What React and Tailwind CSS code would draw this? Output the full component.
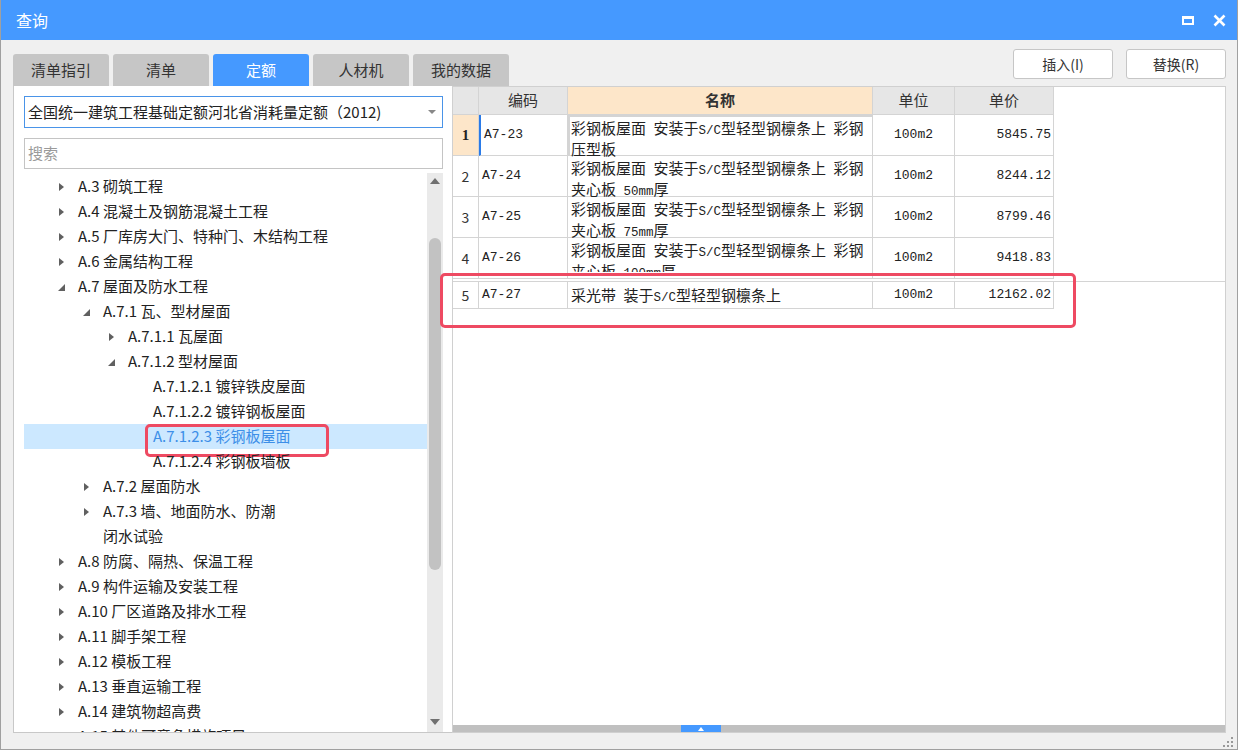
const tabs = ["清单指引", "清单", "定额", "人材机", "我的数据"];

const tree = [
  { t: "A.3 砌筑工程", l: 0, a: "r" },
  { t: "A.4 混凝土及钢筋混凝土工程", l: 0, a: "r" },
  { t: "A.5 厂库房大门、特种门、木结构工程", l: 0, a: "r" },
  { t: "A.6 金属结构工程", l: 0, a: "r" },
  { t: "A.7 屋面及防水工程", l: 0, a: "d" },
  { t: "A.7.1 瓦、型材屋面", l: 1, a: "d" },
  { t: "A.7.1.1 瓦屋面", l: 2, a: "r" },
  { t: "A.7.1.2 型材屋面", l: 2, a: "d" },
  { t: "A.7.1.2.1 镀锌铁皮屋面", l: 3 },
  { t: "A.7.1.2.2 镀锌钢板屋面", l: 3 },
  { t: "A.7.1.2.3 彩钢板屋面", l: 3, sel: true },
  { t: "A.7.1.2.4 彩钢板墙板", l: 3 },
  { t: "A.7.2 屋面防水", l: 1, a: "r" },
  { t: "A.7.3 墙、地面防水、防潮", l: 1, a: "r" },
  { t: "闭水试验", l: 1 },
  { t: "A.8 防腐、隔热、保温工程", l: 0, a: "r" },
  { t: "A.9 构件运输及安装工程", l: 0, a: "r" },
  { t: "A.10 厂区道路及排水工程", l: 0, a: "r" },
  { t: "A.11 脚手架工程", l: 0, a: "r" },
  { t: "A.12 模板工程", l: 0, a: "r" },
  { t: "A.13 垂直运输工程", l: 0, a: "r" },
  { t: "A.14 建筑物超高费", l: 0, a: "r" },
  { t: "A.15 其他可竞争措施项目", l: 0, a: "r" },
];

const indent = ["pl-[34px]", "pl-[59px]", "pl-[84px]", "pl-[109px]"];

const head = "彩钢板屋面 安装于S/C型轻型钢檩条上 彩钢";
const rows = [
  { n: "1", code: "A7-23", name: [head, "压型板"], unit: "100m2", price: "5845.75" },
  { n: "2", code: "A7-24", name: [head, "夹心板 50mm厚"], unit: "100m2", price: "8244.12" },
  { n: "3", code: "A7-25", name: [head, "夹心板 75mm厚"], unit: "100m2", price: "8799.46" },
  { n: "4", code: "A7-26", name: [head, "夹心板 100mm厚"], unit: "100m2", price: "9418.83", clip: true },
  { n: "5", code: "A7-27", name: ["采光带 装于S/C型轻型钢檩条上"], unit: "100m2", price: "12162.02", short: true },
];

const cjk = '"Noto Sans CJK SC", "Noto Sans", sans-serif';

function Mixed({ text }) {
  const parts = text.match(/[\x20-\x7e]+|[^\x20-\x7e]+/g) || [];
  return parts.map((p, i) =>
    /[\x20-\x7e]/.test(p[0]) ? (
      <span key={i} className="font-['Liberation_Mono',monospace] text-[12.5px] whitespace-pre">
        {p}
      </span>
    ) : (
      <span key={i}>{p}</span>
    )
  );
}

function Arrow({ a }) {
  if (a === "r")
    return (
      <svg width="6" height="10" viewBox="0 0 6 10" className="ml-[1px]">
        <path d="M0 1 L5 5 L0 9 Z" fill="#606060" />
      </svg>
    );
  if (a === "d")
    return (
      <svg width="8" height="8" viewBox="0 0 8 8" className="mt-[2px]">
        <path d="M7 0 L7 7 L0 7 Z" fill="#606060" />
      </svg>
    );
  return null;
}

export default function App() {
  return (
    <div
      className="w-[1238px] h-[750px] bg-[#f0f0f0] border-x border-b border-[#a0a0a0] flex flex-col overflow-hidden"
      style={{ fontFamily: cjk }}
    >
      <div className="h-[40px] shrink-0 bg-[#4599ff] flex items-center justify-between pl-[15px] pr-[11px]">
        <span className="text-white text-[16px]">查询</span>
        <div className="flex items-center gap-[19px]">
          <div className="w-[12px] h-[9px] border-2 border-white border-t-[3px]" />
          <svg width="13" height="13" viewBox="0 0 13 13">
            <path d="M1.5 1.5 L11.5 11.5 M11.5 1.5 L1.5 11.5" stroke="white" strokeWidth="2.6" />
          </svg>
        </div>
      </div>

      <div className="flex-1 flex flex-col pl-[12px] pr-[11px]">
        <div className="h-[46px] flex justify-between shrink-0">
          <div className="flex gap-[4px] mt-[14px]">
            {tabs.map((t) => (
              <div
                key={t}
                className={
                  "w-[96px] h-[32px] rounded-t-[3px] flex items-center justify-center text-[15px] " +
                  (t === "定额" ? "bg-[#4599ff] text-white" : "bg-[#c6c6c6] text-[#333]")
                }
              >
                {t}
              </div>
            ))}
          </div>
          <div className="flex gap-[13px] mt-[9px]">
            {["插入(I)", "替换(R)"].map((b) => (
              <div
                key={b}
                className="w-[100px] h-[30px] bg-white border border-[#c6c6c6] rounded-[3px] flex items-center justify-center text-[14px] text-[#333]"
              >
                {b}
              </div>
            ))}
          </div>
        </div>

        <div className="h-[647px] flex shrink-0">
          {/* left panel */}
          <div className="w-[439px] bg-white border-l border-b border-[#c8c8c8] flex flex-col pl-[10px] pr-[8px] pt-[10px]">
            <div className="w-[419px] h-[32px] border border-[#4a94e8] flex items-center justify-between pl-[3px] pr-[6px] text-[15px] text-[#222]">
              <span>全国统一建筑工程基础定额河北省消耗量定额（2012)</span>
              <svg width="8" height="5" viewBox="0 0 8 5">
                <path d="M0 0 L8 0 L4 4 Z" fill="#888" />
              </svg>
            </div>
            <div className="w-[419px] h-[31px] mt-[10px] border border-[#c4c4c4] flex items-center pl-[3px] text-[15px] text-[#9a9a9a]">
              搜索
            </div>
            <div className="flex-1 min-h-0 mt-[4px] flex overflow-hidden">
              <div className="w-[403px] pt-[1px] overflow-hidden">
                {tree.map((r) => (
                  <div
                    key={r.t}
                    className={
                      "relative h-[25px] flex items-center text-[15px] whitespace-nowrap " +
                      indent[r.l] +
                      (r.sel ? " bg-[#cce8ff] text-[#3d8fe8]" : " text-[#222]")
                    }
                  >
                    <div className="w-[20px] h-[25px] flex items-center">
                      <Arrow a={r.a} />
                    </div>
                    <span>{r.t}</span>
                    {r.sel && (
                      <div className="absolute left-[121px] top-0 w-[184px] h-[33px] border-[3px] border-[#ee4a62] rounded-[5px]" />
                    )}
                  </div>
                ))}
              </div>
              <div className="w-[16px] bg-[#eaeaea] flex flex-col items-center">
                <div className="h-[16px] flex items-center justify-center">
                  <svg width="10" height="6" viewBox="0 0 10 6">
                    <path d="M0 6 L5 0 L10 6 Z" fill="#707070" />
                  </svg>
                </div>
                <div className="mt-[49px] w-[12px] h-[332px] rounded-full bg-[#c2c2c2]" />
                <div className="flex-1" />
                <div className="h-[20px] flex items-center justify-center">
                  <svg width="10" height="6" viewBox="0 0 10 6">
                    <path d="M0 0 L10 0 L5 6 Z" fill="#707070" />
                  </svg>
                </div>
              </div>
            </div>
          </div>

          {/* right panel */}
          <div className="relative w-[774px] bg-white border border-[#d0d0d0] flex flex-col">
            <div className="text-[#222]">
              <div className="flex h-[28px] text-[15px] text-[#333]">
                <div className="w-[26px] bg-[#e6e6e6] border-r border-b border-[#d4d4d4]" />
                <div className="w-[89px] bg-[#e6e6e6] border-r border-b border-[#d4d4d4] flex items-center justify-center">编码</div>
                <div className="w-[305px] bg-[#fde6c9] border-r border-b border-[#d4d4d4] flex items-center justify-center font-bold">名称</div>
                <div className="w-[82px] bg-[#e6e6e6] border-r border-b border-[#d4d4d4] flex items-center justify-center">单位</div>
                <div className="w-[99px] bg-[#e6e6e6] border-r border-b border-[#d4d4d4] flex items-center justify-center">单价</div>
              </div>
              {rows.map((r) => (
                <div key={r.n} className={"flex " + (r.short ? "h-[28px] mt-[2px] border-t border-[#d4d4d4]" : "h-[41px]")}>
                  <div
                    className={
                      "w-[26px] border-r border-b border-[#d4d4d4] flex items-center justify-center " +
                      (r.n === "1"
                        ? "bg-[#fde6c9] font-['Liberation_Serif',serif] font-bold text-[15px]"
                        : "text-[14px] text-[#333]")
                    }
                  >
                    {r.n}
                  </div>
                  <div
                    className={
                      "w-[89px] border-r border-b border-[#d4d4d4] flex items-center pl-[3px] font-['Liberation_Mono',monospace] text-[13px] " +
                      (r.n === "1" ? "border-l-2 border-l-[#2a7be8] pl-[1px]" : "")
                    }
                  >
                    {r.code}
                  </div>
                  <div
                    className={
                      "w-[305px] border-r border-b border-[#d4d4d4] text-[15px] leading-[17px] whitespace-nowrap " +
                      (r.n === "1" ? "border-2 border-[#707070] pl-[1px] pt-[2px] " : "pl-[3px] pt-[3px] ") +
                      (r.short ? "flex items-center pt-0" : "")
                    }
                  >
                    <div className={r.clip ? "h-[31px] overflow-hidden" : ""}>
                      {r.name.map((line, i) => (
                        <div key={i}>
                          <Mixed text={line} />
                        </div>
                      ))}
                    </div>
                  </div>
                  <div className="w-[82px] border-r border-b border-[#d4d4d4] flex items-center justify-center font-['Liberation_Mono',monospace] text-[13px]">
                    {r.unit}
                  </div>
                  <div className="w-[99px] border-r border-b border-[#d4d4d4] flex items-center justify-end pr-[2px] font-['Liberation_Mono',monospace] text-[13px]">
                    {r.price}
                  </div>
                </div>
              ))}
            </div>
            <div className="mt-auto h-[7px] bg-[#c0c0c0] flex">
              <div className="ml-[228px] w-[40px] h-[7px] bg-[#4599ff] flex items-center justify-center">
                <svg width="6" height="4" viewBox="0 0 6 4">
                  <path d="M0 4 L3 0 L6 4 Z" fill="white" />
                </svg>
              </div>
            </div>
            <div className="absolute left-[-13px] top-[186px] w-[636px] h-[55px] border-[3px] border-[#ee4a62] rounded-[5px]" />
          </div>
        </div>

        <div className="flex-1 flex justify-end items-end pb-[1px]">
          <svg width="12" height="12" viewBox="0 0 12 12" className="mr-[-8px]">
            {[
              [9, 1],
              [9, 5],
              [5, 5],
              [9, 9],
              [5, 9],
              [1, 9],
            ].map(([x, y]) => (
              <rect key={x + "-" + y} x={x} y={y} width="2" height="2" fill="#999" />
            ))}
          </svg>
        </div>
      </div>
    </div>
  );
}
